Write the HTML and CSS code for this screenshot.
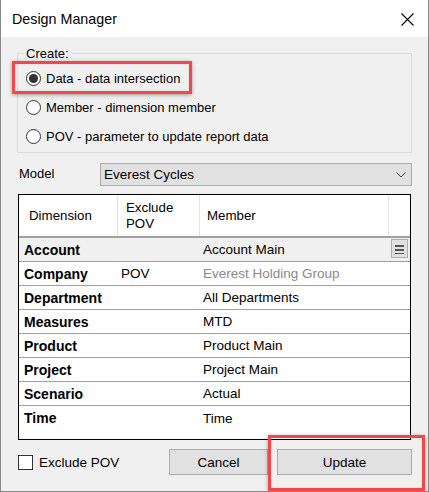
FILE: index.html
```html
<!DOCTYPE html>
<html>
<head>
<meta charset="utf-8">
<link rel="stylesheet" href="styles.css">
</head>
<body>
<div class="window">
  <div class="titlebar">
    <span class="title">Design Manager</span>
    <svg class="close" width="13" height="13" viewBox="0 0 13 13"><path d="M0.5 0.5 L12.5 12.5 M12.5 0.5 L0.5 12.5" stroke="#000" stroke-width="1.1" fill="none"/></svg>
  </div>
  <div class="content">
    <div class="group">
      <div class="legend">Create:</div>
      <div class="radio-row first"><span class="radio checked"></span><span>Data - data intersection</span></div>
      <div class="radio-row"><span class="radio"></span><span>Member - dimension member</span></div>
      <div class="radio-row"><span class="radio"></span><span>POV - parameter to update report data</span></div>
    </div>
    <div class="model-row">
      <span class="model-label">Model</span>
      <div class="select">
        <span>Everest Cycles</span>
        <svg class="chevron" width="10" height="6" viewBox="0 0 10 6"><path d="M0.5 0.5 L5 5 L9.5 0.5" stroke="#444" stroke-width="1" fill="none"/></svg>
      </div>
    </div>
    <div class="grid">
      <div class="grid-head">
        <div class="hcell c1">Dimension</div>
        <div class="hcell c2">Exclude<br>POV</div>
        <div class="hcell c3">Member</div>
        <div class="hcell c4"></div>
      </div>
      <div class="grid-row current">
        <div class="cell dim">Account</div>
        <div class="cell pov"></div>
        <div class="cell mem">Account Main</div>
        <div class="cell btn-cell"><span class="ellipsis"><svg width="9" height="10" viewBox="0 0 9 10"><rect x="0" y="1" width="9" height="2" fill="#555"/><rect x="0" y="5" width="9" height="2" fill="#555"/><rect x="0" y="9" width="9" height="1" fill="#555"/></svg></span></div>
      </div>
      <div class="grid-row">
        <div class="cell dim">Company</div>
        <div class="cell pov">POV</div>
        <div class="cell mem muted">Everest Holding Group</div>
        <div class="cell"></div>
      </div>
      <div class="grid-row">
        <div class="cell dim">Department</div>
        <div class="cell pov"></div>
        <div class="cell mem">All Departments</div>
        <div class="cell"></div>
      </div>
      <div class="grid-row">
        <div class="cell dim">Measures</div>
        <div class="cell pov"></div>
        <div class="cell mem">MTD</div>
        <div class="cell"></div>
      </div>
      <div class="grid-row">
        <div class="cell dim">Product</div>
        <div class="cell pov"></div>
        <div class="cell mem">Product Main</div>
        <div class="cell"></div>
      </div>
      <div class="grid-row">
        <div class="cell dim">Project</div>
        <div class="cell pov"></div>
        <div class="cell mem">Project Main</div>
        <div class="cell"></div>
      </div>
      <div class="grid-row">
        <div class="cell dim">Scenario</div>
        <div class="cell pov"></div>
        <div class="cell mem">Actual</div>
        <div class="cell"></div>
      </div>
      <div class="grid-row last">
        <div class="cell dim">Time</div>
        <div class="cell pov"></div>
        <div class="cell mem">Time</div>
        <div class="cell"></div>
      </div>
    </div>
    <div class="footer">
      <span class="checkbox"></span>
      <span class="check-label">Exclude POV</span>
      <div class="buttons">
        <div class="button cancel">Cancel</div>
        <div class="button update">Update</div>
      </div>
    </div>
  </div>
  <div class="callout callout-data"></div>
  <div class="callout callout-update"></div>
</div>
</body>
</html>
```
FILE: styles.css
```css
* { box-sizing: border-box; }
html, body { margin: 0; padding: 0; }
body {
  font-family: "Liberation Sans", Arial, sans-serif;
  font-size: 13px;
  color: #000;
  background: #fff;
}
.window {
  position: relative;
  width: 429px;
  height: 492px;
  background: #f0f0f0;
  border-left: 1px solid #8a8a8a;
  border-right: 1px solid #8a8a8a;
  border-bottom: 1px solid #8a8a8a;
  overflow: hidden;
}
.titlebar {
  height: 37px;
  background: #fff;
  display: flex;
  align-items: center;
  justify-content: space-between;
  padding: 0 14px 0 11px;
}
.title {
  font-size: 14.3px;
  margin-top: 1px;
}
.close { display: block; margin-top: 1px; }

.content { display: flex; flex-direction: column; }

.group {
  margin: 16px 16px 0 16px;
  height: 100px;
  border: 1px solid #dcdcdc;
}
.legend {
  margin: -8px 0 0 6px;
  padding: 0 2px;
  width: fit-content;
  line-height: 15px;
  background: #f0f0f0;
}
.radio-row {
  height: 29px;
  display: flex;
  align-items: center;
  gap: 5px;
  padding-left: 8px;
}
.radio-row.first { margin-top: 3px; }
.radio {
  width: 15px;
  height: 15px;
  border: 1px solid #333;
  border-radius: 50%;
  background: #fff;
  display: flex;
  align-items: center;
  justify-content: center;
  flex: none;
}
.radio.checked::after {
  content: "";
  width: 9px;
  height: 9px;
  border-radius: 50%;
  background: #333;
}

.model-row {
  display: flex;
  align-items: center;
  margin-top: 10px;
  padding-left: 18px;
}
.model-label { width: 81px; margin-bottom: 2px; }
.select {
  width: 312px;
  height: 23px;
  border: 1px solid #adadad;
  background: #e1e1e1;
  display: flex;
  align-items: center;
  justify-content: space-between;
  padding: 0 5px 0 3px;
  font-size: 13.5px;
}
.chevron { display: block; }

.grid {
  margin: 8px 0 0 17px;
  width: 393px;
  height: 246px;
  border: 1px solid #000;
  background: #fff;
}
.grid-head, .grid-row {
  display: grid;
  grid-template-columns: 99px 82px 189px 1fr;
}
.grid-head {
  height: 43px;
  border-bottom: 2px solid #a0a0a0;
}
.hcell {
  display: flex;
  align-items: center;
  border-right: 1px solid #e3e3e3;
  line-height: 16px;
  font-size: 13.3px;
}
.hcell.c1 { padding-left: 10px; }
.hcell.c2 { padding-left: 8px; padding-top: 1px; }
.hcell.c3 { padding-left: 7px; }
.hcell.c4 { border-right: none; }

.grid-row {
  height: 24px;
  border-bottom: 1px solid #a0a0a0;
}
.grid-row.last { border-bottom: none; }
.grid-row.current { background: #f0f0f0; }
.cell {
  display: flex;
  align-items: center;
  white-space: nowrap;
}
.cell.dim { padding-left: 5px; font-weight: bold; font-size: 14px; }
.cell.pov { padding-left: 3px; font-size: 13.5px; }
.cell.mem { padding-left: 3px; font-size: 13.5px; }
.muted { color: #8a8a8a; }
.btn-cell { align-items: flex-start; }
.ellipsis {
  margin: 1px 0 0 2px;
  width: 17px;
  height: 19px;
  border: 1px solid #adadad;
  background: #e1e1e1;
  display: flex;
  align-items: center;
  justify-content: center;
}
.ellipsis svg { display: block; }

.footer {
  display: flex;
  align-items: center;
  margin-top: 9px;
  height: 26px;
  padding-left: 17px;
}
.checkbox {
  width: 15px;
  height: 15px;
  border: 1px solid #333;
  background: #fff;
  flex: none;
}
.check-label { margin-left: 6px; font-size: 13.5px; }
.buttons {
  margin-left: auto;
  margin-right: 16px;
  display: flex;
  gap: 9px;
}
.button {
  height: 26px;
  border: 1px solid #adadad;
  background: #e1e1e1;
  display: flex;
  align-items: center;
  justify-content: center;
  font-size: 13.5px;
}
.button.cancel { width: 99px; }
.button.update { width: 135px; }

.callout {
  position: absolute;
  border: 3px solid #f24848;
  box-shadow: 0 1px 4px rgba(0, 0, 0, 0.35), inset 0 0 2px rgba(0, 0, 0, 0.15);
}
.callout-data {
  left: 11px;
  top: 61px;
  width: 180px;
  height: 33px;
}
.callout-update {
  left: 267px;
  top: 435px;
  width: 157px;
  height: 56px;
}
```
